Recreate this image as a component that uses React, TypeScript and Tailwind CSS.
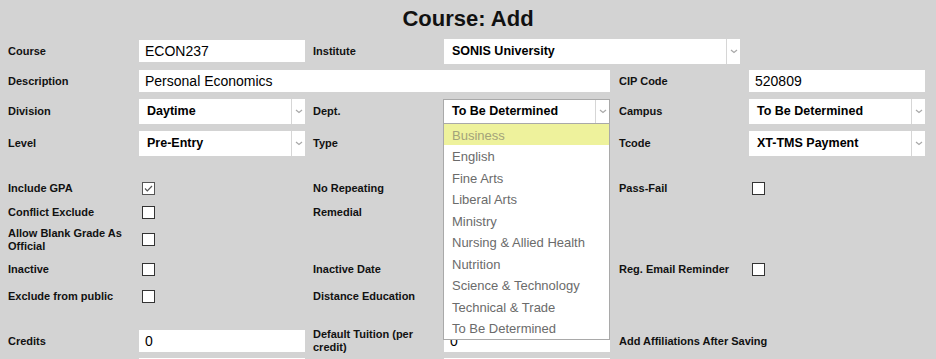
import React from "react";

const F = { fontFamily: '"Liberation Sans", Arial, sans-serif' };

const cols = "grid grid-cols-[131px_166px_139px_166px_139px_176px] pl-2 items-center";

function Chevron() {
  return (
    <svg width="8" height="5" viewBox="0 0 8 5" className="block">
      <path d="M1 1 L4 3.5 L7 1" fill="none" stroke="#a8a8a8" strokeWidth="1.2" />
    </svg>
  );
}

function Label({ children, className = "" }: { children: React.ReactNode; className?: string }) {
  return <div className={"text-[11px] font-bold leading-[13px] text-[#111] " + className}>{children}</div>;
}

function TextInput({ value, className = "" }: { value: string; className?: string }) {
  return (
    <div className={"h-[22px] bg-white flex items-center pl-[6px] text-[14px] text-black " + className}>{value}</div>
  );
}

function Select({ value, className = "", focused = false }: { value: string; className?: string; focused?: boolean }) {
  return (
    <div
      className={
        "h-[25px] bg-white flex items-stretch " +
        (focused ? "border border-[#a9a9a9] " : "") +
        className
      }
    >
      <div className="flex-1 flex items-center pl-2 pt-px text-[12.5px] font-bold text-black">{value}</div>
      <div className="w-[14px] border-l border-[#d6d6d6] flex items-center justify-center">
        <Chevron />
      </div>
    </div>
  );
}

function Checkbox({ checked = false, className = "" }: { checked?: boolean; className?: string }) {
  return (
    <div
      className={
        "w-[13px] h-[13px] bg-white border flex items-center justify-center " +
        (checked ? "border-[#555]" : "border-[#333]") +
        " " +
        className
      }
    >
      {checked && (
        <svg width="11" height="11" viewBox="0 0 11 11">
          <path d="M2 5.5 L4.3 7.8 L9 3" fill="none" stroke="#555" strokeWidth="1.2" />
        </svg>
      )}
    </div>
  );
}

const depts = [
  "Business",
  "English",
  "Fine Arts",
  "Liberal Arts",
  "Ministry",
  "Nursing & Allied Health",
  "Nutrition",
  "Science & Technology",
  "Technical & Trade",
  "To Be Determined",
];

export default function App() {
  return (
    <div className="w-[936px] h-[359px] bg-[#d3d3d3] overflow-hidden relative" style={F}>
      <div className="h-[38px] flex items-center justify-center pb-px">
        <h1 className="text-[22px] font-bold text-[#111] leading-none">Course: Add</h1>
      </div>

      {/* Row 1 */}
      <div className={cols + " h-[26px]"}>
        <Label className="pt-px">Course</Label>
        <TextInput value="ECON237" />
        <Label className="pl-2 pt-px">Institute</Label>
        <div className="col-span-2 w-[296px]">
          <Select value="SONIS University" />
        </div>
        <div />
      </div>

      {/* Row 2 */}
      <div className={cols + " h-[26px] mt-1"}>
        <Label className="pt-px">Description</Label>
        <TextInput value="Personal Economics" className="col-span-3" />
        <Label className="pl-[9px] pt-px">CIP Code</Label>
        <TextInput value="520809" />
      </div>

      {/* Row 3 */}
      <div className={cols + " h-[26px] mt-1"}>
        <Label className="pt-px">Division</Label>
        <Select value="Daytime" />
        <Label className="pl-2 pt-px">Dept.</Label>
        <div className="relative">
          <Select value="To Be Determined" focused className="-ml-px" />
          <div className="absolute left-[-1px] right-0 top-[25px] z-10 bg-white border border-t-0 border-[#a9a9a9]">
            {depts.map((d, i) => (
              <div
                key={d}
                className={
                  "h-[21.5px] flex items-center pl-2 pt-[2px] text-[13px] " +
                  (i === 0 ? "bg-[#eef29c] text-[#a3a37a]" : "text-[#6b6b6b]")
                }
              >
                {d}
              </div>
            ))}
          </div>
        </div>
        <Label className="pl-[9px] pt-px">Campus</Label>
        <Select value="To Be Determined" />
      </div>

      {/* Row 4 */}
      <div className={cols + " h-[26px] mt-[6px]"}>
        <Label className="pt-px">Level</Label>
        <Select value="Pre-Entry" />
        <Label className="pl-2 pt-px">Type</Label>
        <div />
        <Label className="pl-[9px] pt-px">Tcode</Label>
        <Select value="XT-TMS Payment" />
      </div>

      {/* Checkbox rows */}
      <div className={cols + " h-[21px] mt-[22px]"}>
        <Label>Include GPA</Label>
        <Checkbox checked className="ml-[3px]" />
        <Label className="pl-2">No Repeating</Label>
        <div />
        <Label className="pl-[9px]">Pass-Fail</Label>
        <Checkbox className="ml-[3px]" />
      </div>

      <div className={cols + " h-[22px] mt-[2px]"}>
        <Label>Conflict Exclude</Label>
        <Checkbox className="ml-[3px]" />
        <Label className="pl-2">Remedial</Label>
        <div />
        <div />
        <div />
      </div>

      <div className={cols + " h-[27px] mt-[3px]"}>
        <Label className="pr-2">Allow Blank Grade As Official</Label>
        <Checkbox className="ml-[3px]" />
        <div />
        <div />
        <div />
        <div />
      </div>

      <div className={cols + " h-[22px] mt-[5px]"}>
        <Label>Inactive</Label>
        <Checkbox className="ml-[3px]" />
        <Label className="pl-2">Inactive Date</Label>
        <div />
        <Label className="pl-[9px]">Reg. Email Reminder</Label>
        <Checkbox className="ml-[3px]" />
      </div>

      <div className={cols + " h-[22px] mt-[5px]"}>
        <Label>Exclude from public</Label>
        <Checkbox className="ml-[3px]" />
        <Label className="pl-2">Distance Education</Label>
        <div />
        <div />
        <div />
      </div>

      <div className={cols + " h-[22px] mt-[21px]"}>
        <Label>Credits</Label>
        <TextInput value="0" />
        <Label className="pl-2 pr-3">Default Tuition (per credit)</Label>
        <TextInput value="0" />
        <Label className="pl-[9px] col-span-2">Add Affiliations After Saving</Label>
      </div>

      <div className={cols + " h-[22px] mt-[8px]"}>
        <div />
        <div className="h-[22px] bg-white" />
        <div />
        <div className="h-[22px] bg-white" />
        <div />
        <div />
      </div>
    </div>
  );
}
